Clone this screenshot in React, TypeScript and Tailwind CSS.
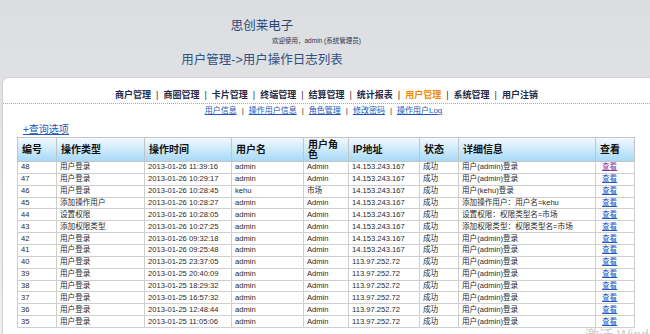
import React from "react";

const cjk = "'Liberation Sans', 'Noto Sans CJK SC', sans-serif";

const navItems = ["商户管理", "商圈管理", "卡片管理", "终端管理", "结算管理", "统计报表", "用户管理", "系统管理", "用户注销"];
const subItems = ["用户信息", "操作用户信息", "角色管理", "修改密码", "操作用户Log"];

type Row = { id: number; type: string; time: string; user: string; role: string; ip: string; detail: string };

const rows: Row[] = [
  { id: 48, type: "用户登录", time: "2013-01-26 11:39:16", user: "admin", role: "Admin", ip: "14.153.243.167", detail: "用户(admin)登录" },
  { id: 47, type: "用户登录", time: "2013-01-26 10:29:17", user: "admin", role: "Admin", ip: "14.153.243.167", detail: "用户(admin)登录" },
  { id: 46, type: "用户登录", time: "2013-01-26 10:28:45", user: "kehu", role: "市场", ip: "14.153.243.167", detail: "用户(kehu)登录" },
  { id: 45, type: "添加操作用户", time: "2013-01-26 10:28:27", user: "admin", role: "Admin", ip: "14.153.243.167", detail: "添加操作用户：用户名=kehu" },
  { id: 44, type: "设置权限", time: "2013-01-26 10:28:05", user: "admin", role: "Admin", ip: "14.153.243.167", detail: "设置权限：权限类型名=市场" },
  { id: 43, type: "添加权限类型", time: "2013-01-26 10:27:25", user: "admin", role: "Admin", ip: "14.153.243.167", detail: "添加权限类型：权限类型名=市场" },
  { id: 42, type: "用户登录", time: "2013-01-26 09:32:18", user: "admin", role: "Admin", ip: "14.153.243.167", detail: "用户(admin)登录" },
  { id: 41, type: "用户登录", time: "2013-01-26 09:25:48", user: "admin", role: "Admin", ip: "14.153.243.167", detail: "用户(admin)登录" },
  { id: 40, type: "用户登录", time: "2013-01-25 23:37:05", user: "admin", role: "Admin", ip: "113.97.252.72", detail: "用户(admin)登录" },
  { id: 39, type: "用户登录", time: "2013-01-25 20:40:09", user: "admin", role: "Admin", ip: "113.97.252.72", detail: "用户(admin)登录" },
  { id: 38, type: "用户登录", time: "2013-01-25 18:29:32", user: "admin", role: "Admin", ip: "113.97.252.72", detail: "用户(admin)登录" },
  { id: 37, type: "用户登录", time: "2013-01-25 16:57:32", user: "admin", role: "Admin", ip: "113.97.252.72", detail: "用户(admin)登录" },
  { id: 36, type: "用户登录", time: "2013-01-25 12:48:44", user: "admin", role: "Admin", ip: "113.97.252.72", detail: "用户(admin)登录" },
  { id: 35, type: "用户登录", time: "2013-01-25 11:05:06", user: "admin", role: "Admin", ip: "113.97.252.72", detail: "用户(admin)登录" },
];

const headers = [
  { label: "编号", w: "w-[39px]" },
  { label: "操作类型", w: "w-[88px]" },
  { label: "操作时间", w: "w-[87px]" },
  { label: "用户名", w: "w-[72px]" },
  { label: "用户角色", w: "w-[45px]" },
  { label: "IP地址", w: "w-[71px]" },
  { label: "状态", w: "w-[39px]" },
  { label: "详细信息", w: "w-[137px]" },
  { label: "查看", w: "w-[39px]" },
];

export default function App() {
  return (
    <div className="relative h-[334px] w-[650px] overflow-hidden bg-gradient-to-b from-[#dcdde0] to-[#eeeff0]" style={{ fontFamily: cjk }}>
      {/* title block */}
      <div className="h-[77px] w-[524px] text-center">
        <div className="pt-[18px] text-[12.5px] leading-[16px] text-[#2a4775]">思创莱电子</div>
        <div className="ml-[272px] mt-[2px] text-left text-[6.5px] leading-[10px] text-[#2a3550]">欢迎使用，admin (系统管理员)</div>
        <div className="mt-[6px] text-[12.5px] leading-[16px] text-[#2f5185]">用户管理-&gt;用户操作日志列表</div>
      </div>

      <div className="ml-[2px] h-[257px] rounded-tl-[6px] border-l border-t border-[#cfcfcf] bg-white">
        <div className="flex justify-center pt-[11px] text-[9px] font-bold leading-[12px] text-[#1f2a48]">
          {navItems.map((n, i) => (
            <React.Fragment key={n}>
              {i > 0 && <span className="mx-[5px] font-normal text-[#333]">|</span>}
              <span className={n === "用户管理" ? "text-[#f28a00]" : ""}>{n}</span>
            </React.Fragment>
          ))}
        </div>
        <div className="mt-[2px] border-b border-dotted border-[#a8a8a8]" />
        <div className="mt-[2px] flex justify-center pr-[6px] text-[8px] leading-[10px]">
          {subItems.map((n, i) => (
            <React.Fragment key={n}>
              {i > 0 && <span className="mx-[5px] text-[#333]">|</span>}
              <span className="text-[#2358b8] underline">{n}</span>
            </React.Fragment>
          ))}
        </div>
        <div className="ml-[20px] mt-[8px] text-[10px] leading-[12px] text-[#2358b8] underline">+查询选项</div>

        <table className="ml-[14px] mt-[1px] w-[617px] table-fixed border-collapse border border-[#b8b8b8]">
          <thead>
            <tr className="h-[24px] bg-gradient-to-b from-[#f2f9fe] to-[#a3d8f6]">
              {headers.map((h) => (
                <th key={h.label} className={`${h.w} border border-[#c4c4c4] px-[4px] py-0 text-left align-middle text-[10px] font-bold leading-[10px] text-[#111]`}>
                  {h.label}
                </th>
              ))}
            </tr>
          </thead>
          <tbody className="text-[7.6px] text-[#2a2a2a]">
            {rows.map((r, i) => (
              <tr key={r.id} className="h-[11.86px]">
                <td className="border border-[#cfcfcf] px-[3px] py-0 leading-[10px]">{r.id}</td>
                <td className="border border-[#cfcfcf] px-[3px] py-0 leading-[10px]">{r.type}</td>
                <td className="border border-[#cfcfcf] px-[3px] py-0 leading-[10px]">{r.time}</td>
                <td className="border border-[#cfcfcf] px-[3px] py-0 leading-[10px]">{r.user}</td>
                <td className="border border-[#cfcfcf] px-[3px] py-0 leading-[10px]">{r.role}</td>
                <td className="border border-[#cfcfcf] px-[3px] py-0 leading-[10px]">{r.ip}</td>
                <td className="border border-[#cfcfcf] px-[3px] py-0 leading-[10px]">成功</td>
                <td className="border border-[#cfcfcf] px-[3px] py-0 leading-[10px]">{r.detail}</td>
                <td className="border border-[#cfcfcf] px-[6px] py-0 leading-[10px]">
                  <span className={`underline ${i === 0 ? "text-[#8b3b9e]" : "text-[#2358c8]"}`}>查看</span>
                </td>
              </tr>
            ))}
          </tbody>
        </table>
      </div>

      {/* OS watermark overlay */}
      <div className="pointer-events-none absolute left-[585px] top-[327px] whitespace-nowrap text-[14px] leading-[16px] text-[#cdcdcd]">激活 Windows</div>
    </div>
  );
}
